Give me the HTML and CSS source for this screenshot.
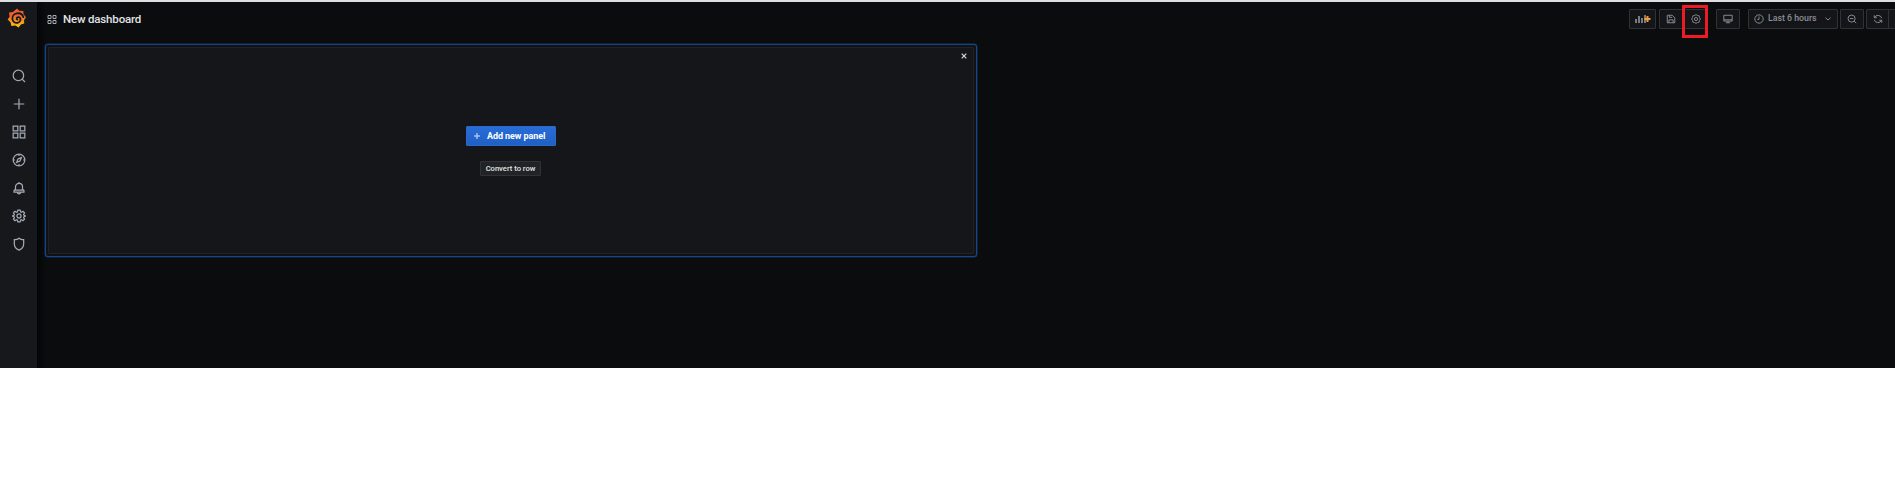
FILE: index.html
```html
<!DOCTYPE html>
<html lang="en">
<head>
<meta charset="utf-8">
<title>New dashboard</title>
<link rel="stylesheet" href="styles.css">
</head>
<body>
<div class="app">
  <nav class="sidebar">
    <a class="logo"><svg width="20" height="20" viewBox="0 0 20 20">
      <defs><linearGradient id="flame" x1="0" y1="0" x2="0" y2="1"><stop offset="0" stop-color="#f05a28"/><stop offset=".35" stop-color="#f0602a"/><stop offset="1" stop-color="#fbca0a"/></linearGradient></defs>
      <path fill="url(#flame)" d="M10 .5 12.2 2.8 16.3 2.9 16.6 6.2 19 9.3 17.1 12 17.2 15.6 13.9 16.5 11.6 19.4 8.5 17.6 4.4 18 3.6 14.4.6 11.6 2.6 8.7 2 4.5 5.9 4Z"/>
      <path fill="none" stroke="#17181c" stroke-width="1.8" stroke-linecap="round" d="M16.4 9.2C15.4 6 12.5 4.900 9.900 5.400 6.800 6 5 8.500 5.400 11.200 5.800 14 8.300 15.300 10.600 14.800 12.900 14.300 13.900 12.200 13.400 10.600 12.800 8.900 10.800 8.700 9.900 9.800 9.300 10.600 9.700 11.500 10.400 11.700"/>
    </svg></a>
    <a class="nav-item"><svg class="icon" viewBox="0 0 24 24"><circle cx="11" cy="11" r="9"/><path d="m17.300 17.300 5 5"/></svg></a>
    <a class="nav-item"><svg class="icon" viewBox="0 0 24 24"><path d="M12 3v18M3 12h18"/></svg></a>
    <a class="nav-item"><svg class="icon" viewBox="0 0 24 24"><path d="M2 2h8v8H2zM14 2h8v8h-8zM2 14h8v8H2zM14 14h8v8h-8z"/></svg></a>
    <a class="nav-item"><svg class="icon" viewBox="0 0 24 24"><circle cx="12" cy="12" r="10"/><path d="M12 2v3M12 19v3M2 12h3M19 12h3M16 8l-2.300 5.700L8 16l2.300-5.700z"/></svg></a>
    <a class="nav-item"><svg class="icon" viewBox="0 0 24 24"><path d="M12 1.500V4M6 14V10a6 6 0 0 1 12 0v4l2.500 2.500v2.500h-17v-2.500zM4.200 15.500h15.600M9 19c.5 4 5.500 4 6 0"/></svg></a>
    <a class="nav-item"><svg class="icon" viewBox="0 0 24 24"><path d="M10 2h4l.7 2.800 1.600.7 2.500-1.500 2.700 2.700L20 9.300l.6 1.500L23 12l-2.400 1.300-.6 1.500 1.500 2.500-2.700 2.700-2.500-1.500-1.600.7L14 22h-4l-.7-2.800-1.600-.7L5.200 20l-2.700-2.700L4 14.800l-.6-1.500L1 12l2.400-1.200L4 9.300 2.500 6.700 5.200 4l2.500 1.500 1.600-.7z"/><circle cx="12" cy="12" r="3.500"/></svg></a>
    <a class="nav-item"><svg class="icon" viewBox="0 0 24 24"><path d="M4 4.500Q8.500 5 12 2q3.500 3 8 2.500V12q0 7-8 10.500Q4 19 4 12z"/></svg></a>
  </nav>
  <main class="main">
    <header class="topbar">
      <svg class="title-icon" viewBox="0 0 10 10"><path d="M1 .5h3v3H1zM6 .5h3v3H6zM1 5.500h3v3H1zM6 5.500h3v3H6z"/></svg>
      <h1 class="title">New dashboard</h1>
      <div class="toolbar">
        <button class="btn add"><svg width="16" height="10" viewBox="0 0 16 10"><path fill="#777a80" d="M0 5h2v4H0zM3 2h2v7H3zM6 4h2v5H6zM9 1h2v8H9z"/><path stroke="#f79a32" stroke-width="2" d="M12.500 2v6M9.500 5h6"/></svg></button>
        <button class="btn save"><svg class="tool-icon" viewBox="0 0 24 24"><path d="M3 3h12l6 6v12H3zM8 3v5h7M7 21v-7h10v7"/></svg></button>
        <div class="settings"><button class="btn cog"><svg class="tool-icon" viewBox="0 0 24 24"><path d="M8.500 3.500 12 1.500l3.500 2 4 .8.700 4L22.500 12l-2.300 3.700-.7 4-4 .8-3.500 2-3.500-2-4-.8-.7-4L1.500 12l2.300-3.700.7-4z"/><circle cx="12" cy="12" r="3.800"/></svg></button><span class="highlight"></span></div>
        <button class="btn monitor"><svg class="tool-icon" viewBox="0 0 24 24"><path d="M2 3h20v14H2zM2 14h20M12 17v4M7 21h10"/></svg></button>
        <button class="btn time"><svg class="tool-icon" viewBox="0 0 24 24"><circle cx="12" cy="12" r="10"/><path d="M12 6v7H8"/></svg><span class="time-text">Last 6 hours</span><svg class="chevron" viewBox="0 0 6 4"><path d="m.5.7 2.500 2.300L5.500.7"/></svg></button>
        <button class="btn zoom"><svg class="tool-icon" viewBox="0 0 24 24"><circle cx="11" cy="11" r="8.500"/><path d="M7 11h8M17 17l5 5"/></svg></button>
        <button class="btn refresh"><svg class="tool-icon" viewBox="0 0 24 24"><path d="M3 3v6h6M3.500 8.500A9.500 9.500 0 0 1 21 10M21 21v-6h-6M20.500 15.500A9.500 9.500 0 0 1 3 14"/></svg></button>
        <button class="btn interval"></button>
      </div>
    </header>
    <section class="panel">
      <div class="panel-inner">
        <svg class="close" viewBox="0 0 6 6"><path d="m.7.7 4.600 4.600M5.300.7.7 5.300"/></svg>
        <button class="primary"><svg class="plus" viewBox="0 0 8 8"><path d="M4 1v6M1 4h6"/></svg><span class="primary-text">Add new panel</span></button>
        <button class="secondary">Convert to row</button>
      </div>
    </section>
  </main>
</div>
</body>
</html>
```
FILE: styles.css
```css
* { box-sizing: border-box; }
body { margin: 0; background: #fff; font-family: Roboto, "Liberation Sans", sans-serif; overflow: hidden; }
button { font-family: inherit; margin: 0; padding: 0; white-space: nowrap; }
svg { display: block; flex: none; }
.app { display: flex; height: 368px; border-top: 2px solid #dcdfe2; background: #0b0c0e; overflow: hidden; }
.sidebar { width: 37px; flex: none; background: #17181c; display: flex; flex-direction: column; align-items: center; }
.logo { height: 59.5px; padding: 6px 3px 0 0; }
.nav-item { height: 28px; display: flex; align-items: center; }
.icon { width: 14px; height: 14px; fill: none; stroke: #a4aab4; stroke-width: 2.100; }
.main { flex: 1; min-width: 0; padding-left: 8px; background: linear-gradient(90deg, #040506, #0b0c0e 9px); }
.topbar { height: 42px; display: flex; align-items: flex-start; padding-left: 2px; }
.title-icon { width: 10px; height: 10px; margin: 13px 6px 0 0; fill: none; stroke: #a5abb3; stroke-width: 1; }
.title { margin: 10px 0 0; font-size: 11.5px; line-height: 14px; font-weight: 500; color: #e0e2e6; white-space: nowrap; letter-spacing: -.17px; }
.toolbar { display: flex; margin: 7px 0 0 auto; flex: none; }
.btn { display: flex; align-items: center; justify-content: center; height: 20px; border: 1px solid #303236; border-radius: 1px; background: #141518; color: #8b8e94; }
.tool-icon { width: 10px; height: 10px; fill: none; stroke: #85898f; stroke-width: 2.400; }
.add { width: 27px; margin-right: 3px; }
.save { width: 24px; }
.settings { position: relative; margin-left: 1px; }
.cog { width: 24px; }
.highlight { position: absolute; left: -2px; top: -4px; width: 26px; height: 33px; border: 3px solid #ed1c24; }
.monitor { width: 24px; margin-left: 8px; }
.time { width: 90px; margin-left: 8px; justify-content: flex-start; padding-left: 5px; }
.time-text { margin: -2px 0 0 4px; width: 49px; font-size: 8.800px; line-height: 12px; font-weight: 500; text-align: left; letter-spacing: -.02px; }
.chevron { width: 6px; height: 4px; margin-left: 8px; fill: none; stroke: #85898f; stroke-width: 1; }
.zoom { width: 24px; margin-left: 2px; }
.refresh { width: 23px; margin-left: 2px; }
.interval { width: 7px; margin-left: -1px; border-right: 0; }
.panel { width: 932px; height: 213px; border: 1px solid #174587; border-radius: 3px; padding: 2px; background: #101216; box-shadow: 0 0 0 .5px #12346b; }
.panel-inner { position: relative; height: 100%; border: 1px solid #202226; background: #15161a; border-radius: 1px; display: flex; flex-direction: column; align-items: center; padding-top: 78px; }
.close { position: absolute; top: 5px; right: 6px; width: 6px; height: 6px; stroke: #d6dade; stroke-width: 1.200; fill: none; }
.primary { width: 90px; height: 20px; display: flex; align-items: center; padding-left: 6px; border: 1px solid #2b68cb; border-radius: 1px; background: linear-gradient(#286cd6, #1f60c4); color: #fff; font-size: 9px; font-weight: 700; }
.plus { width: 8px; height: 8px; fill: none; stroke: #d7e5fb; stroke-width: 1; margin-right: 6px; }
.primary-text { line-height: 12px; letter-spacing: -.08px; }
.secondary { width: 61px; height: 15px; margin: 15px 1px 0 0; border: 1px solid #303238; border-radius: 1px; background: #212327; color: #e4e5e6; font-size: 7.600px; line-height: 12px; font-weight: 500; }
```
